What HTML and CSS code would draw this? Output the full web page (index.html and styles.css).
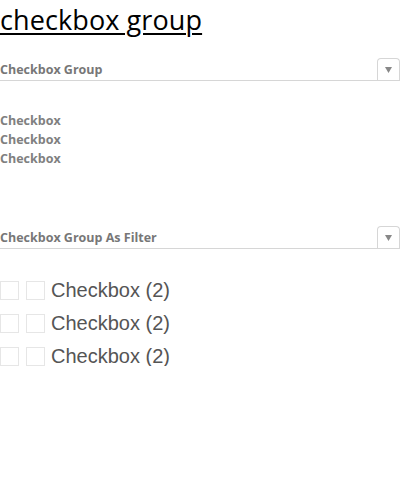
FILE: index.html
```html
<!DOCTYPE html>
<html>
<head>
<meta charset="utf-8">
<link rel="stylesheet" href="styles.css">
</head>
<body>
<h1 class="title">checkbox group</h1>

<div class="section-header first">
  <span class="section-label">Checkbox Group</span>
  <button class="toggle" type="button">
    <svg width="7" height="6" viewBox="0 0 7 6"><path d="M0 0 H7 L3.5 6 Z" fill="#888"/></svg>
  </button>
</div>

<ul class="plain-list">
  <li>Checkbox</li>
  <li>Checkbox</li>
  <li>Checkbox</li>
</ul>

<div class="section-header second">
  <span class="section-label">Checkbox Group As Filter</span>
  <button class="toggle" type="button">
    <svg width="7" height="6" viewBox="0 0 7 6"><path d="M0 0 H7 L3.5 6 Z" fill="#888"/></svg>
  </button>
</div>

<ul class="filter-list">
  <li class="filter-row"><span class="box"></span><span class="box"></span><span class="filter-text">Checkbox (2)</span></li>
  <li class="filter-row"><span class="box"></span><span class="box"></span><span class="filter-text">Checkbox (2)</span></li>
  <li class="filter-row"><span class="box"></span><span class="box"></span><span class="filter-text">Checkbox (2)</span></li>
</ul>
</body>
</html>
```

FILE: styles.css
```css
html, body {
  margin: 0;
  padding: 0;
  background: #fff;
}

body {
  font-family: "Open Sans", "Liberation Sans", sans-serif;
  width: 400px;
}

.title {
  margin: 0;
  font-family: "Open Sans", sans-serif;
  font-weight: 400;
  font-size: 27px;
  line-height: 40px;
  letter-spacing: 0.1px;
  color: #000;
  text-decoration: underline;
  text-decoration-thickness: 2px;
  text-underline-offset: 3px;
}

.section-header {
  display: flex;
  align-items: flex-end;
  justify-content: space-between;
  border-bottom: 1px solid #d6d6d6;
  height: 22px;
}

.section-header.first {
  margin-top: 18px;
}

.section-header.second {
  margin-top: 58px;
}

.section-label {
  font-size: 12.5px;
  font-weight: 700;
  color: #777;
  line-height: 14px;
  padding-bottom: 3px;
  letter-spacing: 0;
}

.toggle {
  width: 23px;
  height: 22px;
  padding: 0;
  margin: 0;
  border: 1px solid #d6d6d6;
  border-bottom: none;
  border-radius: 4px 4px 0 0;
  background: #fff;
  display: flex;
  align-items: center;
  justify-content: center;
}

.plain-list {
  list-style: none;
  margin: 30px 0 0;
  padding: 0;
}

.plain-list li {
  font-size: 12.5px;
  font-weight: 700;
  color: #808080;
  line-height: 19px;
  letter-spacing: 0;
}

.filter-list {
  list-style: none;
  margin: 32px 0 0;
  padding: 0;
  display: flex;
  flex-direction: column;
  gap: 14px;
}

.filter-row {
  display: flex;
  align-items: center;
  gap: 7px;
  height: 19px;
}

.box {
  width: 17px;
  height: 17px;
  border: 1px solid #e6e6e6;
  background: #fff;
  flex: none;
}

.filter-text {
  font-family: "Liberation Sans", Arial, sans-serif;
  font-size: 20px;
  color: #555;
  line-height: 19px;
  margin-left: -1px;
}
```
